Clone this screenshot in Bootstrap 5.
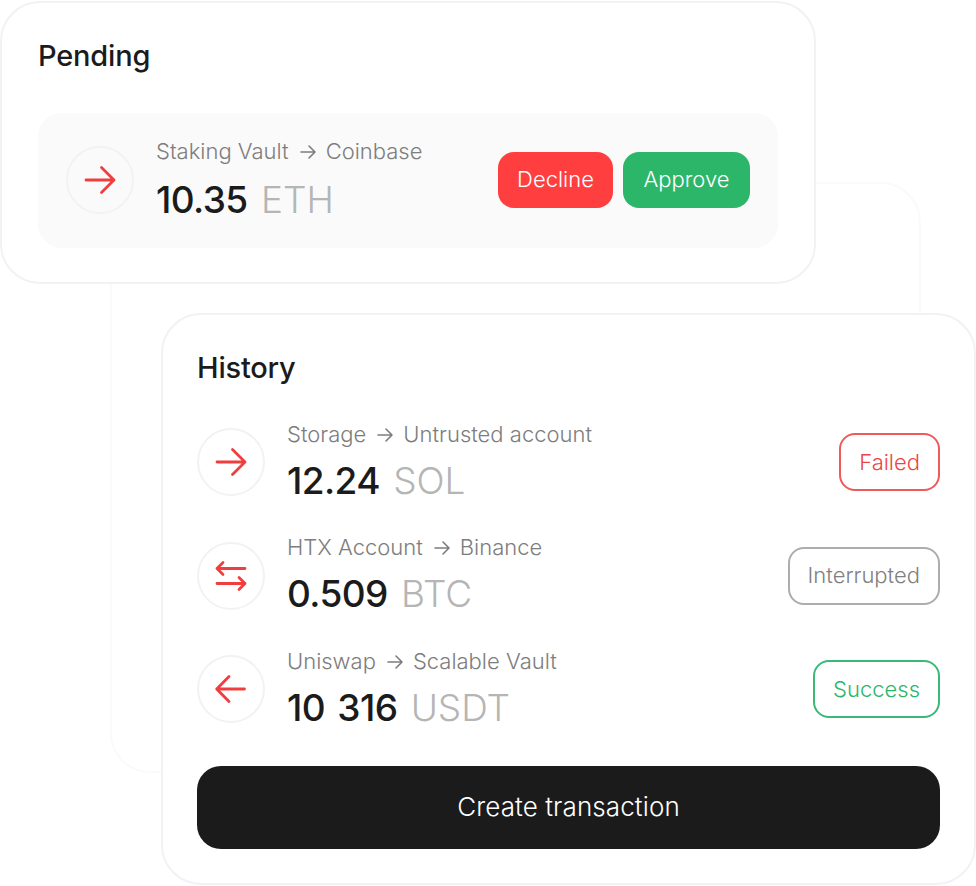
<!DOCTYPE html>
<html lang="en">
<head>
    <meta charset="UTF-8">
    <title>Transactions</title>
    <link rel="stylesheet" href="https://cdn.jsdelivr.net/npm/bootstrap@5.3.0/dist/css/bootstrap.min.css">
    <style>
        body { background: #fff; font-family: Inter, "Noto Sans", sans-serif; color: #1b1b1b; overflow: hidden; }
        .stage { position: relative; width: 976px; height: 886px; }
        .panel { position: absolute; background: #fff; border: 2px solid #f2f2f2; border-radius: 40px; }
        .panel-back { left: 110px; top: 182px; width: 811px; height: 591px; border-color: #fafafa; }
        .panel-pending { left: 0; top: 1px; width: 816px; height: 283px; padding: 35px 36px 0 36px; }
        .panel-history { left: 161px; top: 313px; width: 815px; height: 572px; padding: 35px 34px 0 34px; }
        .panel-title { font-size: 29px; font-weight: 500; line-height: 36px; letter-spacing: -0.2px; margin: 0; }
        .pending-row { margin-top: 39px; height: 135px; background: #fafafa; border-radius: 24px; padding: 0 28px 2px 28px; }
        .tx-circle { width: 68px; height: 68px; border: 2px solid #f2f2f2; border-radius: 50%; flex-shrink: 0; background: #fff; }
        .tx-circle svg { width: 36px; height: 36px; fill: none; stroke: #f03e3e; stroke-width: 2.8; stroke-linecap: round; stroke-linejoin: round; }
        .pending-row .tx-circle { background: transparent; }
        .tx-text { margin-left: 22px; }
        .tx-route { font-size: 22px; font-weight: 300; line-height: 30px; color: #7d7d7d; letter-spacing: 0; white-space: nowrap; }
        .tx-route svg { width: 18px; height: 18px; margin: 0 9px 0 10px; vertical-align: -2px; fill: none; stroke: #7d7d7d; stroke-width: 1.6; stroke-linecap: round; stroke-linejoin: round; }
        .tx-amount { font-size: 37px; font-weight: 500; line-height: 46px; margin-top: 11px; letter-spacing: -0.6px; word-spacing: 3px; white-space: nowrap; }
        .tx-amount span { color: #b5b5b5; font-weight: 300; margin-left: 1px; letter-spacing: 0; }
        .act-group { gap: 10px; }
        .act-btn { height: 56px; border: 0; border-radius: 16px; color: #fff; font-size: 22px; font-weight: 300; padding: 0; }
        .act-decline { width: 115px; background: #ff3f3f; }
        .act-approve { width: 127px; background: #2bb66a; }
        .history-list { margin-top: 42px; }
        .history-row { height: 68px; margin-bottom: 45.5px; }
        .history-row:last-child { margin-bottom: 0; }
        .history-row .tx-text { padding-bottom: 2px; }
        .history-row .tx-amount { margin-top: 9px; }
        .state-tag { height: 58px; border: 2px solid; border-radius: 16px; font-size: 22px; font-weight: 300; padding: 0 18px; background: #fff; }
        .state-failed { color: #ef4444; border-color: #ef5a5a; }
        .state-interrupted { color: #808080; border-color: #adadad; }
        .state-success { color: #2bb66a; border-color: #3cb878; }
        .create-btn { display: block; width: 743px; height: 83px; margin-top: 43px; padding: 0 0 3px; background: #1b1b1b; color: #fff; border: 0; border-radius: 24px; font-size: 26px; font-weight: 300; letter-spacing: 0.1px; }
    </style>
</head>
<body>
<div class="stage">
    <div class="panel panel-back"></div>

    <div class="panel panel-pending">
        <h2 class="panel-title">Pending</h2>
        <div class="pending-row d-flex align-items-center">
            <div class="tx-circle d-flex align-items-center justify-content-center">
                <svg viewBox="0 0 36 36"><path d="M4 18H32M19.5 5.5L32 18L19.5 30.5"/></svg>
            </div>
            <div class="tx-text flex-grow-1">
                <div class="tx-route">Staking Vault<svg viewBox="0 0 18 18"><path d="M2 9H16M10 3L16 9L10 15"/></svg>Coinbase</div>
                <div class="tx-amount">10.35 <span>ETH</span></div>
            </div>
            <div class="d-flex act-group">
                <button class="act-btn act-decline" type="button">Decline</button>
                <button class="act-btn act-approve" type="button">Approve</button>
            </div>
        </div>
    </div>

    <div class="panel panel-history">
        <h2 class="panel-title">History</h2>
        <div class="history-list">
            <div class="history-row d-flex align-items-center">
                <div class="tx-circle d-flex align-items-center justify-content-center">
                    <svg viewBox="0 0 36 36"><path d="M4 18H32M19.5 5.5L32 18L19.5 30.5"/></svg>
                </div>
                <div class="tx-text flex-grow-1">
                    <div class="tx-route">Storage<svg viewBox="0 0 18 18"><path d="M2 9H16M10 3L16 9L10 15"/></svg>Untrusted account</div>
                    <div class="tx-amount">12.24 <span>SOL</span></div>
                </div>
                <div class="state-tag state-failed d-flex align-items-center">Failed</div>
            </div>
            <div class="history-row d-flex align-items-center">
                <div class="tx-circle d-flex align-items-center justify-content-center">
                    <svg viewBox="0 0 36 36"><path d="M32 10.5H4M10 4.5L4 10.5L10 16.5M4 25.5H32M26 19.5L32 25.5L26 31.5"/></svg>
                </div>
                <div class="tx-text flex-grow-1">
                    <div class="tx-route">HTX Account<svg viewBox="0 0 18 18"><path d="M2 9H16M10 3L16 9L10 15"/></svg>Binance</div>
                    <div class="tx-amount">0.509 <span>BTC</span></div>
                </div>
                <div class="state-tag state-interrupted d-flex align-items-center">Interrupted</div>
            </div>
            <div class="history-row d-flex align-items-center">
                <div class="tx-circle d-flex align-items-center justify-content-center">
                    <svg viewBox="0 0 36 36"><path d="M31.5 18H3.7M16 5.5L3.7 18L16 30.5"/></svg>
                </div>
                <div class="tx-text flex-grow-1">
                    <div class="tx-route">Uniswap<svg viewBox="0 0 18 18"><path d="M2 9H16M10 3L16 9L10 15"/></svg>Scalable Vault</div>
                    <div class="tx-amount">10 316 <span>USDT</span></div>
                </div>
                <div class="state-tag state-success d-flex align-items-center">Success</div>
            </div>
        </div>
        <button class="create-btn" type="button">Create transaction</button>
    </div>
</div>
<script src="https://cdn.jsdelivr.net/npm/bootstrap@5.3.0/dist/js/bootstrap.bundle.min.js"></script>
</body>
</html>
